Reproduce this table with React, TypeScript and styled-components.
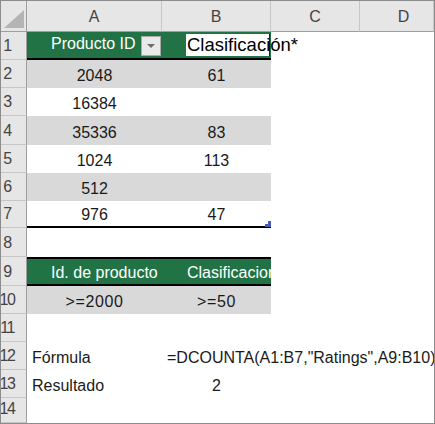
import React from 'react';
import styled, { createGlobalStyle } from 'styled-components';

const GlobalStyle = createGlobalStyle`
  html, body {
    margin: 0;
    padding: 0;
    background: #ffffff;
  }
  body {
    font-family: "Liberation Sans", Arial, sans-serif;
  }
`;

const GREEN = '#217346';
const BAND = '#d9d9d9';
const HEAD = '#e6e6e6';

const Sheet = styled.div`
  width: 435px;
  height: 424px;
  box-sizing: border-box;
  border: 1px solid #8c8c8c;
  display: grid;
  grid-template-columns: 26px 135px 109px 89px 1fr;
  grid-template-rows: 31px 28px 28px 28px 29px 28px 28px 27px 29px 29px 28px 28px 28px 28px 1fr;
  overflow: hidden;
  background: #ffffff;
  font-family: "Liberation Sans", Arial, sans-serif;
`;

const Corner = styled.div`
  background: ${HEAD};
  border-right: 1px solid #9e9e9e;
  border-bottom: 1px solid #9e9e9e;
  display: flex;
  align-items: flex-end;
  justify-content: flex-end;
  padding: 0 2px 3px 0;
`;

const ColHead = styled.div<{ $shift?: number }>`
  background: ${HEAD};
  border-right: 1px solid #c6c6c6;
  border-bottom: 1px solid #9e9e9e;
  display: flex;
  align-items: flex-end;
  justify-content: center;
  padding: 0 0 5px ${p => p.$shift || 0}px;
  font-size: 16px;
  line-height: 18px;
  color: #444444;
  &:last-child {
    border-right: none;
  }
`;

const RowHead = styled.div`
  background: ${HEAD};
  border-right: 1px solid #9e9e9e;
  border-bottom: 1px solid #c6c6c6;
  display: flex;
  align-items: flex-end;
  justify-content: center;
  padding: 0 13px 4px 0;
  font-size: 16px;
  line-height: 18px;
  letter-spacing: -1.5px;
  color: #444444;
  white-space: nowrap;
  overflow: visible;
`;

type Align = 'left' | 'center' | 'right';

const Cell = styled.div<{
  $bg?: string;
  $align?: Align;
  $color?: string;
  $top?: boolean;
  $bottom?: boolean;
  $indent?: number;
  $clip?: boolean;
}>`
  position: relative;
  box-sizing: border-box;
  background: ${p => p.$bg || 'transparent'};
  color: ${p => p.$color || '#1a1a1a'};
  border-top: ${p => (p.$top ? '2px solid #000' : 'none')};
  border-bottom: ${p => (p.$bottom ? '2px solid #000' : 'none')};
  display: flex;
  align-items: flex-end;
  justify-content: ${p =>
    p.$align === 'left' ? 'flex-start' : p.$align === 'right' ? 'flex-end' : 'center'};
  padding: 0 0 ${p => (p.$bottom ? 2 : 3)}px ${p => p.$indent || 0}px;
  font-size: 16px;
  line-height: 18px;
  white-space: nowrap;
  overflow: ${p => (p.$clip ? 'hidden' : 'visible')};
  min-width: 0;
`;

const Criteria = styled.span`
  letter-spacing: 0.6px;
`;

const HeaderCell = styled(Cell)`
  justify-content: space-between;
  padding-right: 1px;
  padding-bottom: 2px;
  align-items: flex-end;
`;

const HeaderLabel = styled.span`
  padding-bottom: 3px;
`;

const FilterButton = styled.div`
  width: 20px;
  height: 20px;
  box-sizing: border-box;
  background: #e9e9e9;
  border: 1px solid #a8a8a8;
  display: flex;
  align-items: center;
  justify-content: center;
`;

const EditBox = styled.div`
  margin-left: auto;
  width: 84px;
  height: 22px;
  box-sizing: border-box;
  background: #ffffff;
  border-right: 1px solid #1e1e1e;
  color: #000000;
  font-size: 18.5px;
  line-height: 22px;
  padding-left: 1px;
  white-space: nowrap;
  overflow: visible;
`;

const Handle = styled.svg`
  position: absolute;
  right: 0;
  bottom: -1px;
`;

const ROWS = 14;

const CornerTriangle = () => (
  <svg width="20" height="18" viewBox="0 0 20 18">
    <polygon points="20,0 20,18 0,18" fill="#b4b4b4" />
  </svg>
);

const App = () => {
  const rowNums = Array.from({ length: ROWS }, (_, i) => i + 1);

  const renderRow = (r: number) => {
    switch (r) {
      case 1:
        return [
          <HeaderCell key="a" $bg={GREEN} $color="#ffffff" $bottom $indent={24}>
            <HeaderLabel>Producto ID</HeaderLabel>
            <FilterButton>
              <svg width="8" height="4" viewBox="0 0 8 4">
                <polygon points="0,0 8,0 4,4" fill="#6b6b6b" />
              </svg>
            </FilterButton>
          </HeaderCell>,
          <HeaderCell key="b" $bg={GREEN} $bottom>
            <EditBox>Clasificación*</EditBox>
          </HeaderCell>,
        ];
      case 2:
        return [
          <Cell key="a" $bg={BAND}>2048</Cell>,
          <Cell key="b" $bg={BAND}>61</Cell>,
        ];
      case 3:
        return [<Cell key="a">16384</Cell>, <Cell key="b" />];
      case 4:
        return [
          <Cell key="a" $bg={BAND}>35336</Cell>,
          <Cell key="b" $bg={BAND}>83</Cell>,
        ];
      case 5:
        return [<Cell key="a">1024</Cell>, <Cell key="b">113</Cell>];
      case 6:
        return [
          <Cell key="a" $bg={BAND}>512</Cell>,
          <Cell key="b" $bg={BAND} />,
        ];
      case 7:
        return [
          <Cell key="a" $bottom>976</Cell>,
          <Cell key="b" $bottom>
            47
            <Handle width="6" height="6" viewBox="0 0 6 6">
              <path d="M3 0H6V6H0V3H3Z" fill="#4a5cb4" />
            </Handle>
          </Cell>,
        ];
      case 9:
        return [
          <Cell key="a" $bg={GREEN} $color="#ffffff" $top $bottom $align="left" $indent={24}>
            Id. de producto
          </Cell>,
          <Cell key="b" $bg={GREEN} $color="#ffffff" $top $bottom $align="left" $indent={25} $clip>
            Clasificacion
          </Cell>,
        ];
      case 10:
        return [
          <Cell key="a" $bg={BAND}><Criteria>&gt;=2000</Criteria></Cell>,
          <Cell key="b" $bg={BAND}><Criteria>&gt;=50</Criteria></Cell>,
        ];
      case 12:
        return [
          <Cell key="a" $align="left" $indent={5}>Fórmula</Cell>,
          <Cell key="b" $align="left" $indent={5}>=DCOUNTA(A1:B7,"Ratings",A9:B10)</Cell>,
        ];
      case 13:
        return [
          <Cell key="a" $align="left" $indent={5}>Resultado</Cell>,
          <Cell key="b">2</Cell>,
        ];
      default:
        return [<Cell key="a" />, <Cell key="b" />];
    }
  };

  return (
    <>
      <GlobalStyle />
      <Sheet>
        <Corner>
          <CornerTriangle />
        </Corner>
        <ColHead>A</ColHead>
        <ColHead>B</ColHead>
        <ColHead>C</ColHead>
        <ColHead $shift={14}>D</ColHead>
        {rowNums.map(r => (
          <React.Fragment key={r}>
            <RowHead>{r}</RowHead>
            {renderRow(r)}
            <Cell />
            <Cell />
          </React.Fragment>
        ))}
      </Sheet>
    </>
  );
};

export default App;
